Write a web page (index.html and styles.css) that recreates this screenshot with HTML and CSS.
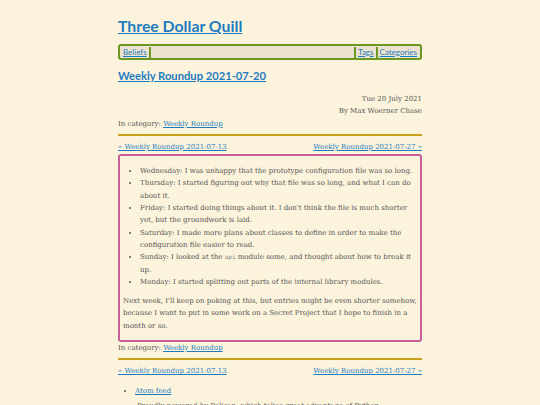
FILE: index.html
```html
<!DOCTYPE html>
<html lang="en">
<head>
<meta charset="utf-8">
<title>Weekly Roundup 2021-07-20 - Three Dollar Quill</title>
<link rel="stylesheet" href="styles.css">
</head>
<body>
<div class="page">
  <header class="site-header">
    <h1 class="site-title"><a href="#">Three Dollar Quill</a></h1>
    <nav class="topnav">
      <a class="nav-item nav-left" href="#">Beliefs</a>
      <span class="nav-spacer"></span>
      <a class="nav-item nav-right" href="#">Tags</a>
      <a class="nav-item nav-right" href="#">Categories</a>
    </nav>
  </header>
  <main>
    <article class="post">
      <h2 class="post-title"><a href="#">Weekly Roundup 2021-07-20</a></h2>
      <div class="meta">
        <div>Tue 20 July 2021</div>
        <div>By Max Woerner Chase</div>
      </div>
      <div class="category">In category: <a href="#">Weekly Roundup</a></div>
      <hr class="rule">
      <nav class="pager"><a href="#">« Weekly Roundup 2021-07-13</a><a href="#">Weekly Roundup 2021-07-27 »</a></nav>
      <div class="content">
        <ul class="days">
          <li>Wednesday: I was unhappy that the prototype configuration file was so long.</li>
          <li>Thursday: I started figuring out why that file was so long, and what I can do about it.</li>
          <li>Friday: I started doing things about it. I don't think the file is much shorter yet, but the groundwork is laid.</li>
          <li>Saturday: I made more plans about classes to define in order to make the configuration file easier to read.</li>
          <li>Sunday: I looked at the <code>api</code> module some, and thought about how to break it up.</li>
          <li>Monday: I started splitting out parts of the internal library modules.</li>
        </ul>
        <p>Next week, I'll keep on poking at this, but entries might be even shorter somehow, because I want to put in some work on a Secret Project that I hope to finish in a month or so.</p>
      </div>
      <div class="category">In category: <a href="#">Weekly Roundup</a></div>
      <hr class="rule">
      <nav class="pager"><a href="#">« Weekly Roundup 2021-07-13</a><a href="#">Weekly Roundup 2021-07-27 »</a></nav>
    </article>
    <ul class="feeds">
      <li><a href="#">Atom feed</a></li>
    </ul>
    <p class="footer-note">Proudly powered by Pelican, which takes great advantage of Python.</p>
  </main>
</div>
</body>
</html>
```

FILE: styles.css
```css
html, body {
  margin: 0;
  padding: 0;
}
body {
  background: #fcf3dc;
  color: #555555;
  font-family: "DejaVu Serif", serif;
  font-size: 7px;
  line-height: 12.3px;
}
a {
  color: #1f7cc0;
  text-decoration: underline;
}
.page {
  width: 304px;
  margin: 0 auto;
  padding-top: 14px;
}
.site-title {
  margin: 0;
  font-family: "Lato", "Open Sans", sans-serif;
  font-weight: 700;
  font-size: 15.8px;
  line-height: 23px;
}
.topnav {
  margin-top: 7px;
  display: flex;
  align-items: center;
  height: 12px;
  border: 2px solid #6a9822;
  border-radius: 3px;
  background: #ebe3cf;
  padding: 0 1px;
  font-family: "Lato", "Open Sans", sans-serif;
  font-size: 8px;
  line-height: 11px;
}
.nav-item {
  padding: 0 2px;
}
.nav-left {
  border-right: 2px solid #6a9822;
}
.nav-right {
  border-left: 2px solid #6a9822;
}
.nav-spacer {
  flex: 1;
}
.post-title {
  margin: 7px 0 0;
  font-family: "Lato", "Open Sans", sans-serif;
  font-weight: 700;
  font-size: 11.2px;
  line-height: 18px;
}
.meta {
  margin-top: 8px;
  text-align: right;
}
.rule {
  margin: 4px 0 5px;
  border: 0;
  height: 2px;
  background: #c9a11f;
}
.pager {
  display: flex;
  justify-content: space-between;
}
.content {
  margin-top: 1px;
  border: 2px solid #c4609c;
  border-radius: 3px;
  padding: 9px 1px 8px 3px;
}
.days {
  margin: 0;
  padding-left: 17px;
}
.days li::marker {
  font-size: 6px;
}
code {
  font-family: "DejaVu Sans Mono", monospace;
  font-size: 6px;
  color: #888;
}
.content p {
  margin: 7px 0 0;
}
.feeds {
  margin: 7px 0 0;
  padding-left: 17px;
}
.footer-note {
  margin: 3px 0 0;
  padding-left: 19px;
}
```
